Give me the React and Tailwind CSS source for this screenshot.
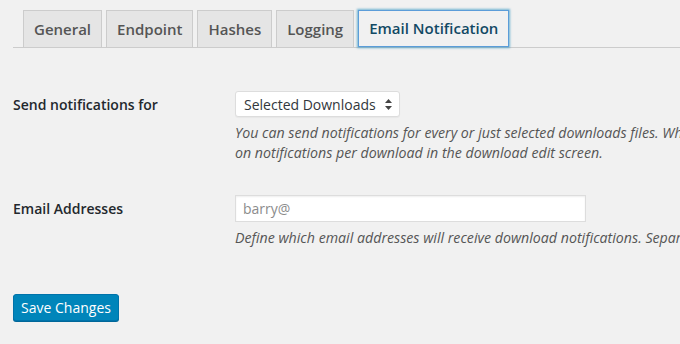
import React from 'react';

const tabs = ['General', 'Endpoint', 'Hashes', 'Logging', 'Email Notification'];

const Tab = ({ label, active }) => (
  <div
    className={`px-[10px] h-[37px] flex items-center text-[15px] font-semibold border ${
      active
        ? 'bg-[#f1f1f1] border-[#5b9dd9] text-[#124964] shadow-[0_0_2px_1px_rgba(30,140,190,0.6)] -mb-px relative'
        : 'bg-[#e5e5e5] border-[#ccc] border-b-0 text-[#555]'
    }`}
  >
    {label}
  </div>
);

export default function App() {
  return (
    <div
      className="w-[680px] h-[344px] overflow-hidden bg-[#f1f1f1] text-[#23282d]"
      style={{ fontFamily: '"Open Sans", "Liberation Sans", sans-serif' }}
    >
      {/* Tab bar */}
      <div className="ml-[13px] pt-[10px] border-b border-[#ccc] flex gap-[4px] pl-[10px]">
        {tabs.map((t, i) => (
          <Tab key={t} label={t} active={i === tabs.length - 1} />
        ))}
      </div>

      <div className="pl-[13px]">
        {/* Row 1 */}
        <div className="flex mt-[43px]">
          <div className="w-[222px] shrink-0 h-[26px] flex items-center text-[14px] font-semibold whitespace-nowrap">
            Send notifications for
          </div>
          <div className="flex-1 min-w-0 whitespace-nowrap">
            <div className="w-[165px] h-[26px] bg-white border border-[#ddd] rounded-[3px] flex items-center justify-between pl-[8px] pr-[7px] text-[14px] text-[#32373c] shadow-[0_1px_1px_rgba(0,0,0,0.04)]">
              <span>Selected Downloads</span>
              <svg width="7" height="11" viewBox="0 0 7 11">
                <path d="M3.5 0 L7 4 L0 4 Z" fill="#444" />
                <path d="M0 7 L7 7 L3.5 11 Z" fill="#444" />
              </svg>
            </div>
            <p className="mt-[6px] text-[14.2px] leading-[20px] italic text-[#555]">
              You can send notifications for every or just selected downloads files. When selected, turn
              <br />
              on notifications per download in the download edit screen.
            </p>
          </div>
        </div>

        {/* Row 2 */}
        <div className="flex mt-[32px]">
          <div className="w-[222px] shrink-0 h-[27px] flex items-center text-[14px] font-semibold whitespace-nowrap">
            Email Addresses
          </div>
          <div className="flex-1 min-w-0 whitespace-nowrap">
            <div className="w-[351px] h-[27px] bg-white border border-[#ddd] shadow-[inset_0_1px_2px_rgba(0,0,0,0.07)] flex items-center pl-[7px] text-[14px] text-[#8c8c8c]">
              barry@
            </div>
            <p className="mt-[6px] text-[14.2px] leading-[20px] italic text-[#555]">
              Define which email addresses will receive download notifications. Separate multiple addresses with a comma.
            </p>
          </div>
        </div>

        <button className="mt-[46px] w-[106px] h-[27px] rounded-[3px] bg-[#0085ba] border border-[#0073aa] text-white text-[14px] flex items-center justify-center shadow-[0_1px_0_#006799]">
          Save Changes
        </button>
      </div>
    </div>
  );
}
